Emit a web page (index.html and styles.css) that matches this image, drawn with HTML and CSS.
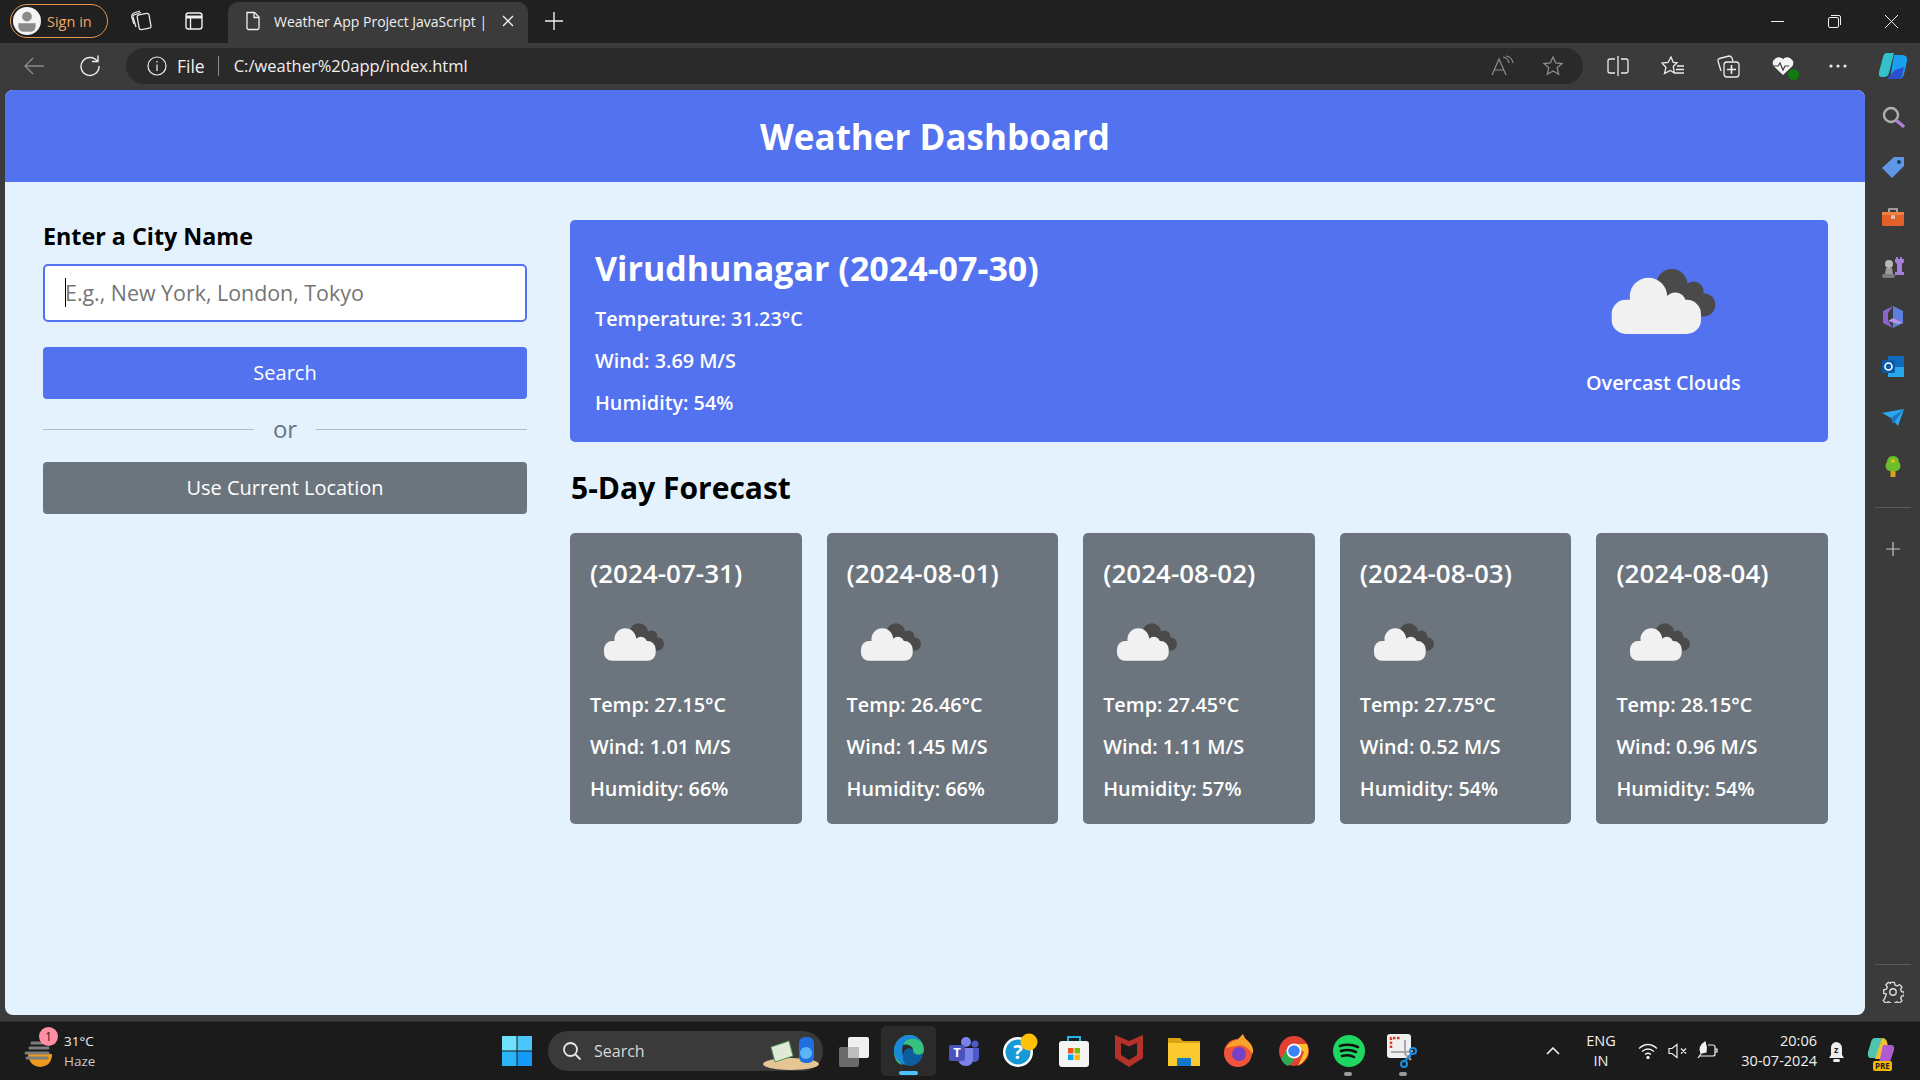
FILE: index.html
```html
<!DOCTYPE html>
<html lang="en">
<head>
    <meta charset="UTF-8">
    <meta name="viewport" content="width=device-width, initial-scale=1.0">
    <title>Weather Dashboard</title>
    <link rel="stylesheet" href="styles.css">
</head>
<body>
    <svg class="defs" width="0" height="0">
        <symbol id="cloud" viewBox="210 85 320 200">
            <circle cx="395" cy="135" r="47" fill="#4a4a4a"/>
            <circle cx="460" cy="155" r="30" fill="#4a4a4a"/>
            <circle cx="490" cy="195" r="35" fill="#4a4a4a"/>
            <rect x="380" y="140" width="80" height="85" fill="#4a4a4a"/>
            <rect x="215" y="180" width="267" height="102" rx="42" fill="#f1f1f1"/>
            <circle cx="325" cy="170" r="56" fill="#f1f1f1"/>
            <circle cx="405" cy="190" r="32" fill="#f1f1f1"/>
        </symbol>
    </svg>

    <div class="tabstrip">
        <div class="signin">
            <span class="avatar">
                <svg width="28" height="28" viewBox="0 0 26 26"><circle cx="13" cy="9" r="4.5" fill="#8a8a8a"/><path d="M5 15h16v3a5 5 0 0 1-5 5h-6a5 5 0 0 1-5-5z" fill="#8a8a8a"/></svg>
            </span>
            <span>Sign in</span>
        </div>
        <svg class="strip-icon collections" width="22" height="22" viewBox="0 0 22 22" fill="none" stroke="#e8e8e8" stroke-width="1.3"><rect x="8" y="5" width="12" height="15" rx="2" transform="rotate(-10 14 12)"/><path d="M6 18 3 8q-.3-1.5 1-2l7-2.5"/><path d="M4 15 1.8 8Q1.5 5 4 4l6-2"/></svg>
        <svg class="strip-icon vertical" width="20" height="20" viewBox="0 0 20 20" fill="none" stroke="#f0f0f0" stroke-width="1.4"><rect x="2" y="2" width="16" height="16" rx="2.5"/><path d="M6.5 6v12"/><path d="M2 6h16" stroke-width="3"/></svg>
        <div class="tab">
            <svg width="18" height="20" viewBox="0 0 18 20" fill="none" stroke="#f0f0f0" stroke-width="1.3"><path d="M3 1.5h7.5L15 6v11a1.5 1.5 0 0 1-1.5 1.5h-9A1.5 1.5 0 0 1 3 17z"/><path d="M10 1.5V6.5h5"/></svg>
            <span class="tab-title">Weather App Project JavaScript |</span>
            <svg width="12" height="12" viewBox="0 0 12 12" stroke="#f0f0f0" stroke-width="1.3"><path d="M1 1l10 10M11 1 1 11"/></svg>
        </div>
        <svg class="new-tab" width="18" height="18" viewBox="0 0 18 18" stroke="#f0f0f0" stroke-width="1.4"><path d="M9 0v18M0 9h18"/></svg>
        <div class="window-btns">
            <svg width="13" height="13" viewBox="0 0 13 13" stroke="#f0f0f0"><path d="M0 6.5h13"/></svg>
            <svg width="13" height="13" viewBox="0 0 13 13" fill="none" stroke="#f0f0f0"><rect x=".5" y="2.5" width="10" height="10" rx="1.5"/><path d="M3 .5h8a1.5 1.5 0 0 1 1.5 1.5v8"/></svg>
            <svg width="13" height="13" viewBox="0 0 13 13" stroke="#f0f0f0"><path d="M0 0l13 13M13 0 0 13"/></svg>
        </div>
    </div>

    <div class="toolbar">
        <svg class="back" width="20" height="18" viewBox="0 0 20 18" fill="none" stroke="#8b8b8b" stroke-width="1.3"><path d="M20 9H1M9 1 1 9l8 8"/></svg>
        <svg class="reload" width="22" height="22" viewBox="0 0 22 22" fill="none" stroke="#ececec" stroke-width="1.4"><path d="M18.5 6.5A9 9 0 1 0 20 11"/><path d="M13 6.5h6v-6"/></svg>
        <div class="address">
            <svg width="20" height="20" viewBox="0 0 20 20" fill="none" stroke="#f0f0f0" stroke-width="1.2"><circle cx="10" cy="10" r="9"/><path d="M10 8.5V15M10 5v1.5"/></svg>
            <span class="file-label">File</span>
            <span class="addr-sep"></span>
            <span class="url">C:/weather%20app/index.html</span>
            <svg class="read-aloud" width="24" height="22" viewBox="0 0 24 22" fill="none" stroke="#8d8d8d" stroke-width="1.2"><path d="M1 20 8 4l7 16M3.5 15h9"/><path d="M12 2q5 1 6 6M15 1q6 1 7 7"/></svg>
            <svg class="addr-star" width="22" height="22" viewBox="0 0 22 22" fill="none" stroke="#8d8d8d" stroke-width="1.3"><path d="m11 2 2.7 6 6.3.6-4.8 4.2 1.5 6.4L11 16l-5.7 3.2 1.5-6.4L2 8.600 8.300 8z"/></svg>
        </div>
        <div class="tool-icons">
            <svg width="22" height="20" viewBox="0 0 22 20" fill="none" stroke="#ececec" stroke-width="1.3"><path d="M8 3H3a2 2 0 0 0-2 2v10a2 2 0 0 0 2 2h5M14 3h5a2 2 0 0 1 2 2v10a2 2 0 0 1-2 2h-5M11 0v20"/></svg>
            <svg width="24" height="22" viewBox="0 0 24 22" fill="none" stroke="#ececec" stroke-width="1.3"><path d="m10 2 2.3 5.5 3.7.3-3.700 3.700 1 6.500-4-2.500-5.800 3 1.500-6L1 8l6-.5zM16 11h7M15 14.5h8M14 18h9"/></svg>
            <svg width="24" height="24" viewBox="0 0 24 24" fill="none" stroke="#ececec" stroke-width="1.3"><path d="M5 17 2 7q-.3-2 1.5-2.500L13 2q2 0 3 2l1 3"/><rect x="8" y="8" width="15" height="15" rx="3"/><path d="M15.5 11v9M11 15.5h9" stroke-width="1.6"/></svg>
            <span class="health">
                <svg width="24" height="22" viewBox="0 0 24 22"><path d="M12 20 2.5 11A6 6 0 0 1 12 4a6 6 0 0 1 9.5 7z" fill="#f4f4f4"/><path d="M1 11h6l2-3 3 7 2-4h4" fill="none" stroke="#3b3b3b" stroke-width="1.2"/></svg>
                <span class="health-dot"></span>
            </span>
            <svg width="20" height="6" viewBox="0 0 20 6" fill="#ececec"><circle cx="3" cy="3" r="1.6"/><circle cx="10" cy="3" r="1.6"/><circle cx="17" cy="3" r="1.6"/></svg>
            <svg width="30" height="28" viewBox="0 0 30 28"><path d="M9 1h7l-5 20q-1 4-5 4H4Q0 25 1 20L5 5q1-4 4-4z" fill="#35c1c9"/><path d="M16 3h8q6 0 5 6l-3 13q-1 5-6 5h-8z" fill="#1a9ff0"/><path d="M9 27h11q3 0 4-3l2-9-9 3z" fill="#2a50cf"/></svg>
        </div>
    </div>

    <div class="middle">
        <div class="page">
            <h1 class="page-title">Weather Dashboard</h1>
            <div class="container">
                <div class="weather-input">
                    <h3 class="input-label">Enter a City Name</h3>
                    <div class="input-wrap">
                        <input class="city-input" type="text" placeholder="E.g., New York, London, Tokyo">
                        <span class="caret"></span>
                    </div>
                    <button class="btn search-btn">Search</button>
                    <div class="separator"><span>or</span></div>
                    <button class="btn location-btn">Use Current Location</button>
                </div>
                <div class="weather-data">
                    <div class="current-weather">
                        <div class="details">
                            <h2>Virudhunagar (2024-07-30)</h2>
                            <p>Temperature: 31.23°C</p>
                            <p>Wind: 3.69 M/S</p>
                            <p>Humidity: 54%</p>
                        </div>
                        <div class="current-icon">
                            <svg class="cloud-big"><use href="#cloud"/></svg>
                            <p>Overcast Clouds</p>
                        </div>
                    </div>
                    <h2 class="forecast-title">5-Day Forecast</h2>
                    <ul class="weather-cards">
                        <li class="card">
                            <h3>(2024-07-31)</h3>
                            <svg class="cloud-small"><use href="#cloud"/></svg>
                            <p>Temp: 27.15°C</p>
                            <p>Wind: 1.01 M/S</p>
                            <p>Humidity: 66%</p>
                        </li>
                        <li class="card">
                            <h3>(2024-08-01)</h3>
                            <svg class="cloud-small"><use href="#cloud"/></svg>
                            <p>Temp: 26.46°C</p>
                            <p>Wind: 1.45 M/S</p>
                            <p>Humidity: 66%</p>
                        </li>
                        <li class="card">
                            <h3>(2024-08-02)</h3>
                            <svg class="cloud-small"><use href="#cloud"/></svg>
                            <p>Temp: 27.45°C</p>
                            <p>Wind: 1.11 M/S</p>
                            <p>Humidity: 57%</p>
                        </li>
                        <li class="card">
                            <h3>(2024-08-03)</h3>
                            <svg class="cloud-small"><use href="#cloud"/></svg>
                            <p>Temp: 27.75°C</p>
                            <p>Wind: 0.52 M/S</p>
                            <p>Humidity: 54%</p>
                        </li>
                        <li class="card">
                            <h3>(2024-08-04)</h3>
                            <svg class="cloud-small"><use href="#cloud"/></svg>
                            <p>Temp: 28.15°C</p>
                            <p>Wind: 0.96 M/S</p>
                            <p>Humidity: 54%</p>
                        </li>
                    </ul>
                </div>
            </div>
        </div>

        <div class="sidebar">
            <svg width="24" height="24" viewBox="0 0 24 24" fill="none"><circle cx="10" cy="10" r="7" stroke="#b0b0b0" stroke-width="2.4"/><path d="m16 16 6 5" stroke="#b07fd8" stroke-width="3.5" stroke-linecap="round"/></svg>
            <svg width="24" height="24" viewBox="0 0 24 24"><path d="M13 2h9a1 1 0 0 1 1 1v8L11 23 1 13z" fill="#5f96e6"/><circle cx="18" cy="7" r="2" fill="#1e3a6a"/></svg>
            <svg width="24" height="24" viewBox="0 0 24 24"><path d="M8 7V4h8v3" fill="none" stroke="#bbb" stroke-width="1.6"/><rect x="1" y="7" width="22" height="14" rx="1.5" fill="#e2602a"/><rect x="1" y="7" width="22" height="3" fill="#f08040"/><rect x="10" y="10" width="4" height="4" rx="1" fill="#d9c3b0"/></svg>
            <svg width="24" height="24" viewBox="0 0 24 24"><path d="M15 2h2v2h2V2h2v2h2v3l-2 2v8h2v3H14v-3h2V9l-2-2V4h1z" fill="#a57fd9"/><circle cx="8" cy="9" r="4" fill="#b8b8b8"/><path d="M5 13h6l1 6H4z" fill="#9a9a9a"/><rect x="1" y="19" width="13" height="4" rx="2" fill="#7c7c7c"/></svg>
            <svg width="24" height="24" viewBox="0 0 24 24"><path d="M12 1 22 6v12l-10 5z" fill="#5c7fe0"/><path d="M12 1 2 6v12l10 5-5-7V8z" fill="#8a63d2"/><path d="M7 16l10 3 5-1-10-5z" fill="#b794e4"/></svg>
            <svg width="24" height="24" viewBox="0 0 24 24"><rect x="7" y="1" width="16" height="21" rx="1" fill="#0f6cbd"/><path d="M7 12h16v10H7z" fill="#28a8ea"/><rect x="1" y="5" width="13" height="13" rx="1.5" fill="#0a5aa8"/><circle cx="7.5" cy="11.5" r="3.5" fill="none" stroke="#fff" stroke-width="1.6"/></svg>
            <svg width="24" height="24" viewBox="0 0 24 24"><path d="M1 8 23 4 17 21l-7-8z" fill="#2ca8f0"/><path d="M23 4 10 13l2 6z" fill="#1c74c8"/></svg>
            <svg width="24" height="24" viewBox="0 0 24 24"><path d="M12 1c4 0 6 3 6 6 3 3 1 9-3 9H9c-4 0-6-6-3-9 0-3 2-6 6-6z" fill="#6cbf2a"/><rect x="9.5" y="16" width="5" height="6" fill="#d7a21b"/><circle cx="12" cy="6" r="2" fill="#e8c018"/></svg>
            <span class="side-sep side-sep-top"></span>
            <svg width="16" height="16" viewBox="0 0 16 16" stroke="#c4c4c4" stroke-width="1.2"><path d="M8 1v14M1 8h14"/></svg>
            <span class="side-sep side-sep-bottom"></span>
            <svg width="22" height="22" viewBox="0 0 24 24" fill="none" stroke="#dcdcdc" stroke-width="1.5"><circle cx="12" cy="12" r="3.5"/><path d="M10 2h4l.6 3 2.5 1.100 2.600-1.600 2.800 2.800-1.600 2.600 1.100 2.500 3 .6v4l-3 .6-1.100 2.500 1.600 2.600-2.800 2.800-2.600-1.600-2.500 1.100-.6 3h-4l-.6-3-2.500-1.100-2.600 1.600-2.800-2.800 1.600-2.600L4.900 15l-3-.6v-4l3-.6L6 7.300 4.400 4.700l2.800-2.800 2.200 1.300z" transform="translate(0 -.5) scale(.97)"/></svg>
        </div>
    </div>

    <div class="taskbar">
        <div class="tb-weather">
            <span class="tb-weather-icon">
                <svg width="32" height="34" viewBox="0 0 32 34"><path d="M4 20h24q0 12-12 13Q5 32 4 20z" fill="#ef9a1f"/><path d="M8 9h10M6 14h18M2 19h22M3 24h20" stroke="#7d7d7d" stroke-width="3" stroke-linecap="round"/></svg>
                <span class="tb-badge">1</span>
            </span>
            <div class="tb-weather-text">
                <span>31°C</span>
                <span class="muted">Haze</span>
            </div>
        </div>
        <div class="tb-center">
            <svg class="win" width="30" height="30" viewBox="0 0 30 30"><rect width="14.5" height="14.5" fill="#6ee0fb"/><rect x="15.5" width="14.5" height="14.5" fill="#4cc6fa"/><rect y="15.5" width="14.5" height="14.5" fill="#2cb4f9"/><rect x="15.5" y="15.5" width="14.5" height="14.5" fill="#159bf7"/></svg>
            <div class="tb-search">
                <svg width="20" height="20" viewBox="0 0 20 20" fill="none" stroke="#e6e6e6" stroke-width="1.8"><circle cx="8.5" cy="8.5" r="6.5"/><path d="m13.5 13.5 5 5"/></svg>
                <span>Search</span>
                <svg class="tb-search-art" width="60" height="40" viewBox="0 0 60 40"><ellipse cx="30" cy="33" rx="28" ry="6" fill="#e6c595"/><path d="M10 16 28 10l4 15-18 6z" fill="#dfe9d5" stroke="#4f9a5a"/><rect x="38" y="6" width="15" height="26" rx="6" fill="#1f6fe0"/><circle cx="45" cy="22" r="6" fill="#5bb6f5"/></svg>
            </div>
            <div class="tb-apps">
                <span class="tb-app">
                    <svg width="32" height="32" viewBox="0 0 32 32"><rect x="1" y="12" width="20" height="20" rx="2" fill="#6a6a6a"/><rect x="10" y="2" width="21" height="21" rx="2" fill="#f0f0f0"/><rect x="10" y="12" width="11" height="11" fill="#bdbdbd"/></svg>
                </span>
                <span class="tb-app tb-active">
                    <svg width="32" height="34" viewBox="0 0 32 34"><path d="M16 1a15 15 0 0 1 15 15c0 3-2 5-6 5-4 0-6-2-5-5 0-5-9-8-13-3C3 17 4 27 10 31 3 30 1 23 1 17 1 8 8 1 16 1z" fill="#35c27e"/><path d="M1 17C1 8 8 1 16 1c6 0 10 3 12 7-4-4-13-5-17 1-4 7-1 18 6 22-9 1-16-6-16-14z" fill="#1b88d8"/><path d="M20 16c0 4 5 6 10 4-1 7-7 12-13 12-5 0-8-5-7-11 1-6 6-9 10-5z" fill="#0f5c9e"/></svg>
                    <span class="tb-active-bar"></span>
                </span>
                <span class="tb-app">
                    <svg width="32" height="30" viewBox="0 0 32 30"><circle cx="18" cy="6" r="5" fill="#7b83eb"/><circle cx="27" cy="8" r="3.5" fill="#5059c9"/><path d="M22 12h9v9q0 5-5 5l-4-1z" fill="#5059c9"/><path d="M10 12h15v11q0 7-7 7t-8-7z" fill="#7b83eb"/><rect x="1" y="9" width="16" height="16" rx="2" fill="#4b53bc"/><text x="9" y="21" class="teams-t">T</text></svg>
                </span>
                <span class="tb-app">
                    <svg class="help-icon" width="36" height="36" viewBox="0 0 36 36"><circle cx="15" cy="19" r="15" fill="#fff"/><circle cx="15" cy="19" r="12.5" fill="#1699d6"/><text x="15" y="26" class="help-q">?</text><circle cx="26" cy="9" r="8.5" fill="#ffc107"/></svg>
                </span>
                <span class="tb-app">
                    <svg width="30" height="32" viewBox="0 0 30 32"><path d="M9 6V2h12v4" fill="none" stroke="#22b5e8" stroke-width="2"/><rect y="6" width="30" height="26" rx="3" fill="#f4f4f4"/><rect x="9" y="13" width="5.5" height="5.5" fill="#f25022"/><rect x="15.5" y="13" width="5.5" height="5.5" fill="#7fba00"/><rect x="9" y="19.5" width="5.5" height="5.5" fill="#00a4ef"/><rect x="15.5" y="19.5" width="5.5" height="5.5" fill="#ffb900"/></svg>
                </span>
                <span class="tb-app">
                    <svg width="28" height="32" viewBox="0 0 28 32"><path d="M0 0 14 6 28 0v23L14 32 0 23z" fill="#b5322a"/><path d="M6 8l8 3.5L22 8v12l-8 5-8-5z" fill="#1c1c1c"/></svg>
                </span>
                <span class="tb-app">
                    <svg width="32" height="30" viewBox="0 0 32 30"><path d="M0 2h12l3 3h17v25H0z" fill="#d9a514"/><rect y="7" width="32" height="23" fill="#fcc92e"/><rect x="9" y="22" width="14" height="8" rx="1" fill="#0f78c8"/></svg>
                </span>
                <span class="tb-app">
                    <svg width="32" height="34" viewBox="0 0 32 34"><circle cx="15" cy="19" r="14" fill="#f0543a"/><path d="M3 14Q8 6 14 6l6-6q1 4 5 7 6 5 5 13-6-8-13-9z" fill="#f9a32a"/><circle cx="16" cy="20" r="7" fill="#7542c8"/></svg>
                </span>
                <span class="tb-app">
                    <svg width="32" height="32" viewBox="0 0 32 32"><circle cx="16" cy="16" r="15" fill="#e34133"/><path d="M3 24 9 14 16 26 10 31Q5 29 3 24z" fill="#2fa84f"/><path d="M16 9h13q3 8-1 14-3 5-8 8l6-14z" fill="#fbc02d"/><circle cx="16" cy="16" r="7.5" fill="#fff"/><circle cx="16" cy="16" r="5.8" fill="#3a84f5"/></svg>
                </span>
                <span class="tb-app">
                    <svg width="32" height="32" viewBox="0 0 32 32" fill="none"><circle cx="16" cy="16" r="16" fill="#1ed760"/><path d="M7 11q9-3 18 1M8 16q8-2.5 15 1M9 21q7-2 12 1" stroke="#111" stroke-width="2.6" stroke-linecap="round"/></svg>
                    <span class="tb-dot"></span>
                </span>
                <span class="tb-app">
                    <svg width="34" height="34" viewBox="0 0 34 34" fill="none"><rect width="24" height="24" rx="3" fill="#f0f0f0"/><path d="M4 14V4h10" stroke="#d83b20" stroke-width="2.5" stroke-dasharray="2.5 1.5"/><path d="M18 6v14l6 6M4 18h16l6-1" stroke="#a9a9a9" stroke-width="2"/><circle cx="26" cy="17" r="3" stroke="#1c8ee0" stroke-width="2"/><circle cx="17" cy="30" r="3" stroke="#1c8ee0" stroke-width="2"/><path d="M18 27l6-7" stroke="#1c8ee0" stroke-width="2"/></svg>
                    <span class="tb-dot"></span>
                </span>
            </div>
        </div>
        <div class="tb-tray">
            <svg class="tray-chevron" width="14" height="8" viewBox="0 0 14 8" fill="none" stroke="#f0f0f0" stroke-width="1.6"><path d="m1 7 6-6 6 6"/></svg>
            <div class="tray-lang"><span>ENG</span><span>IN</span></div>
            <svg class="tray-wifi" width="20" height="16" viewBox="0 0 20 16" fill="none" stroke="#f0f0f0" stroke-width="1.3"><path d="M1 5.5q9-8 18 0M4 8.5q6-5 12 0M7 11.5q3-2.5 6 0"/><circle cx="10" cy="14.5" r="1" fill="#f0f0f0"/></svg>
            <svg class="tray-vol" width="20" height="16" viewBox="0 0 20 16" fill="none" stroke="#f0f0f0" stroke-width="1.2"><path d="M1 5.5h3L9 1.5v13L4 10.5H1zM13 5.5l5 5M18 5.5l-5 5"/></svg>
            <svg class="tray-batt" width="22" height="20" viewBox="0 0 22 20" fill="none" stroke="#f0f0f0" stroke-width="1.2"><path d="M12 4h5a2 2 0 0 1 2 2v7a2 2 0 0 1-2 2H3M19 8h2v3h-2"/><path d="M9 1C4 4 3 9 5 12l5-1q1-5-1-10zM2 17l5-7" fill="#f0f0f0"/></svg>
            <div class="tray-clock"><span>20:06</span><span>30-07-2024</span></div>
            <svg class="tray-bell" width="20" height="24" viewBox="0 0 20 24"><path d="M8 3a6 6 0 0 1 6 6v7l2 3H1l2-3V9a6 6 0 0 1 5-6z" fill="#eee"/><rect x="5" y="20" width="7" height="3" rx="1.5" fill="#eee"/><text x="6" y="14" class="bell-z">z</text></svg>
            <span class="tray-copilot">
                <svg width="28" height="28" viewBox="0 0 28 28"><path d="M8 1h7l-5 20H3Q0 20 1 15L4 5q1-4 4-4z" fill="#4fc4b0"/><path d="M15 1q4 0 5 4l1 4-8 13H8z" fill="#f0c030"/><path d="M16 8h8q4 0 3 5l-3 9q-1 4-5 4h-7z" fill="#b05bd0"/></svg>
                <span class="pre-badge">PRE</span>
            </span>
        </div>
    </div>
</body>
</html>
```

FILE: styles.css
```css
* {
    box-sizing: border-box;
}
html, body {
    height: 100%;
}
body {
    margin: 0;
    height: 100vh;
    display: flex;
    flex-direction: column;
    overflow: hidden;
    background-color: #3b3b3b;
    font-family: "Open Sans", sans-serif;
    color: #f0f0f0;
}
.defs {
    position: absolute;
}
svg {
    flex: none;
    display: block;
}

/* browser chrome */
.tabstrip {
    height: 43px;
    flex: none;
    display: flex;
    align-items: flex-end;
    padding-left: 10px;
    background-color: #202020;
    font-size: 14.5px;
}
.signin {
    width: 98px;
    height: 34px;
    margin-bottom: 5px;
    display: flex;
    align-items: center;
    gap: 6px;
    padding-left: 2px;
    border: 1px solid #e4954f;
    border-radius: 17px;
    color: #f0a868;
}
.avatar {
    width: 28px;
    height: 28px;
    border-radius: 50%;
    overflow: hidden;
    background-color: #f4f4f4;
}
.strip-icon {
    margin-bottom: 12px;
}
.collections {
    margin-left: 22px;
}
.vertical {
    margin-left: 32px;
}
.tab {
    width: 300px;
    height: 41px;
    margin-left: 24px;
    display: flex;
    align-items: center;
    padding: 0 14px 3px 16px;
    background-color: #3b3b3b;
    border-radius: 10px 10px 0 0;
}
.tab-title {
    flex: 1;
    margin-left: 12px;
    white-space: nowrap;
    overflow: hidden;
    font-size: 14px;
}
.new-tab {
    margin: 0 0 13px 17px;
}
.window-btns {
    margin-left: auto;
    align-self: center;
    display: flex;
    gap: 44px;
    padding-right: 22px;
}
.toolbar {
    height: 43px;
    flex: none;
    display: flex;
    align-items: center;
    padding: 2px 0 0 24px;
    background-color: #3b3b3b;
}
.reload {
    margin-left: 35px;
}
.address {
    width: 1459px;
    height: 36px;
    margin-left: 25px;
    display: flex;
    align-items: center;
    padding: 0 19px 0 21px;
    background-color: #2a2a2a;
    border-radius: 18px;
    font-size: 16.5px;
}
.file-label {
    margin-left: 10px;
    font-size: 17.5px;
}
.addr-sep {
    width: 1px;
    height: 20px;
    margin: 0 15px 0 13px;
    background-color: #8a8a8a;
}
.read-aloud {
    margin-left: auto;
}
.addr-star {
    margin-left: 27px;
}
.tool-icons {
    display: grid;
    grid-template-columns: repeat(6, 55px);
    justify-items: center;
    align-items: center;
    padding-left: 7px;
}
.health {
    position: relative;
    display: block;
}
.health-dot {
    position: absolute;
    right: -4px;
    bottom: -3px;
    width: 11px;
    height: 11px;
    border-radius: 50%;
    background-color: #107c10;
}

/* the page */
.middle {
    flex: 1;
    min-height: 0;
    display: flex;
}
.page {
    flex: 1;
    margin: 4px 0 6px 5px;
    background-color: #e3f2fd;
    border-radius: 8px;
    overflow: hidden;
    color: #000;
}
.page-title {
    margin: 0;
    height: 92px;
    line-height: 94px;
    text-align: center;
    font-size: 35px;
    font-weight: 700;
    color: #fff;
    background-color: #5372f0;
}
.container {
    display: flex;
    gap: 43px;
    padding: 38px 37px 0 38px;
}
.weather-input {
    width: 484px;
    flex: none;
}
.input-label {
    margin: 0 0 12px;
    line-height: 32px;
    font-size: 23.3px;
    font-weight: 700;
}
.input-wrap {
    position: relative;
}
.city-input {
    display: block;
    width: 100%;
    height: 58px;
    padding: 0 20px 2px;
    border: 2px solid #5372f0;
    border-radius: 5px;
    outline: none;
    font-family: inherit;
    font-size: 21.4px;
    background-color: #fff;
}
.city-input::placeholder {
    color: #757575;
}
.caret {
    position: absolute;
    left: 22px;
    top: 14px;
    width: 1px;
    height: 29px;
    background-color: #000;
}
.btn {
    display: block;
    width: 100%;
    height: 52px;
    padding: 0 0 1px;
    border: none;
    border-radius: 4px;
    color: #fff;
    font-family: inherit;
    font-size: 20px;
    font-weight: 500;
}
.search-btn {
    margin-top: 25px;
    background-color: #5372f0;
}
.location-btn {
    background-color: #6c757d;
}
.separator {
    height: 63px;
    padding-bottom: 5px;
    display: flex;
    align-items: center;
    justify-content: center;
    color: #6c757d;
    font-size: 24px;
}
.separator::before,
.separator::after {
    content: "";
    flex: 1;
    height: 1px;
    margin-top: 3px;
    background-color: #bbb;
}
.separator span {
    padding: 0 19px;
}
.weather-data {
    flex: 1;
    min-width: 0;
}
.current-weather {
    height: 222px;
    display: flex;
    justify-content: space-between;
    padding: 25px 88px 0 25px;
    background-color: #5372f0;
    border-radius: 5px;
    color: #fff;
}
.details h2 {
    margin: -1px 0 1px;
    line-height: 48px;
    font-size: 34px;
    font-weight: 700;
}
.details p,
.card p {
    margin: 15px 0 0;
    line-height: 27px;
    font-size: 19.8px;
    font-weight: 600;
}
.details h2 + p {
    margin-top: 13px;
}
.current-icon {
    width: 154px;
    text-align: center;
}
.current-icon p {
    margin: 34px 0 0;
    line-height: 27px;
    font-size: 19.8px;
    font-weight: 600;
    white-space: nowrap;
}
.cloud-big {
    width: 107px;
    height: 67px;
    margin: 23px auto 0;
}
.forecast-title {
    margin: 27px 0 26px 1px;
    line-height: 38px;
    font-size: 30px;
    font-weight: 700;
}
.weather-cards {
    list-style: none;
    margin: 0;
    padding: 0;
    display: flex;
    gap: 25px;
}
.card {
    flex: 1;
    height: 291px;
    padding: 20px 20px 0;
    background-color: #6c757d;
    border-radius: 5px;
    color: #fff;
}
.card h3 {
    margin: 0;
    line-height: 40px;
    font-size: 26px;
    font-weight: 600;
}
.cloud-small {
    width: 62px;
    height: 40px;
    margin: 29px 0 0 13px;
}
.cloud-small + p {
    margin-top: 29px;
}

/* edge sidebar */
.sidebar {
    width: 55px;
    flex: none;
    display: flex;
    flex-direction: column;
    align-items: center;
    gap: 26px;
    padding: 19px 0 18px;
}
.side-sep {
    width: 36px;
    height: 1px;
    background-color: #5a5a5a;
}
.side-sep-top {
    margin: 2px 0 7px;
}
.side-sep-bottom {
    margin: auto 0 -10px;
}

/* windows taskbar */
.taskbar {
    height: 59px;
    flex: none;
    display: flex;
    align-items: center;
    background-color: #1b1b1b;
    border-top: 1px solid #2c2c2c;
}
.tb-weather {
    width: 500px;
    flex: none;
    display: flex;
    align-items: center;
    gap: 8px;
    padding-left: 24px;
    font-size: 13.5px;
}
.tb-weather-icon {
    position: relative;
    display: block;
}
.tb-badge {
    position: absolute;
    right: -2px;
    top: -7px;
    width: 19px;
    height: 19px;
    line-height: 19px;
    text-align: center;
    border-radius: 50%;
    background-color: #ff8fa3;
    color: #222;
    font-size: 12px;
}
.tb-weather-text {
    display: flex;
    flex-direction: column;
    line-height: 20px;
    margin-top: -1px;
}
.muted {
    color: #c8c8c8;
}
.tb-center {
    display: flex;
    align-items: center;
}
.win {
    margin-left: 2px;
}
.tb-search {
    width: 275px;
    height: 40px;
    margin-left: 16px;
    display: flex;
    align-items: center;
    gap: 12px;
    padding-left: 14px;
    background-color: #3a3a3a;
    border-radius: 20px;
    font-size: 16px;
    color: #d8d8d8;
}
.tb-search-art {
    margin-left: auto;
    margin-right: 2px;
}
.tb-apps {
    display: flex;
    margin-left: 3px;
}
.tb-app {
    position: relative;
    width: 55px;
    height: 50px;
    display: flex;
    align-items: center;
    justify-content: center;
}
.help-icon {
    margin-left: 5px;
}
.tb-active {
    background-color: #2b2b2b;
    border-radius: 5px;
}
.tb-active-bar {
    position: absolute;
    left: 18px;
    bottom: 1px;
    width: 19px;
    height: 4px;
    border-radius: 2px;
    background-color: #4cc2ff;
}
.tb-dot {
    position: absolute;
    left: 23px;
    bottom: 0;
    width: 8px;
    height: 4px;
    border-radius: 2px;
    background-color: #9a9a9a;
}
.teams-t {
    fill: #fff;
    font-size: 13px;
    font-weight: 700;
    text-anchor: middle;
}
.help-q {
    fill: #fff;
    font-size: 20px;
    font-weight: 700;
    text-anchor: middle;
}
.bell-z {
    fill: #222;
    font-size: 9px;
    font-weight: 700;
}
.tb-tray {
    flex: 1;
    display: flex;
    align-items: center;
    padding-left: 115px;
    font-size: 14.5px;
}
.tray-lang {
    width: 50px;
    margin-left: 16px;
    display: flex;
    flex-direction: column;
    align-items: center;
    line-height: 20px;
}
.tray-wifi {
    margin-left: 12px;
}
.tray-vol {
    margin-left: 10px;
}
.tray-batt {
    margin-left: 8px;
}
.tray-clock {
    width: 99px;
    display: flex;
    flex-direction: column;
    align-items: flex-end;
    line-height: 20px;
}
.tray-bell {
    margin-left: 11px;
}
.tray-copilot {
    position: relative;
    display: block;
    margin-left: 19px;
}
.pre-badge {
    position: absolute;
    left: 6px;
    bottom: -6px;
    padding: 0 2px;
    line-height: 10px;
    border-radius: 2px;
    background-color: #f5b800;
    color: #222;
    font-size: 8px;
    font-weight: 700;
}
```
